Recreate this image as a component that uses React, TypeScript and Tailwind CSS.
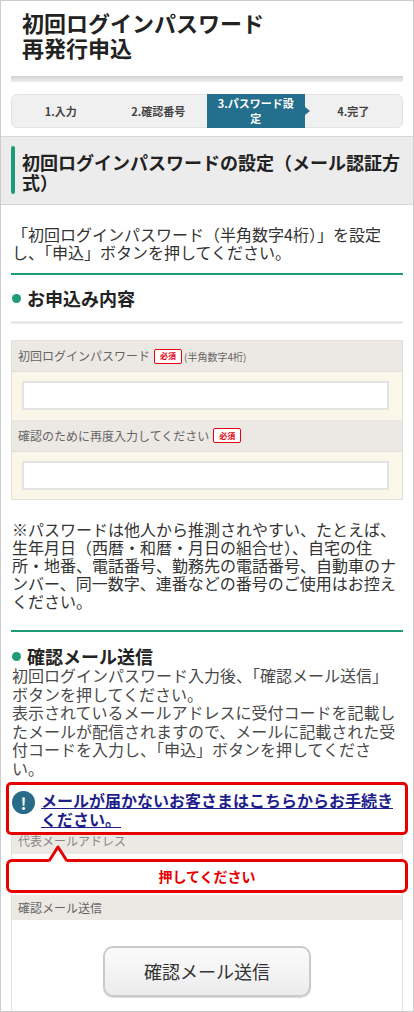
import React from "react";

function Badge() {
  return (
    <span className="ml-[4px] inline-flex h-[15px] w-[28px] items-center justify-center rounded-[2px] border-[1.5px] border-[#e60012] bg-white text-[8px] font-bold leading-none text-[#e60012]">
      必須
    </span>
  );
}

function SectionHead({ children }: { children: React.ReactNode }) {
  return (
    <div className="flex items-center pl-[11px] text-[18px] font-bold leading-[24px] text-[#222]">
      <span className="mr-[6px] h-[9px] w-[9px] rounded-full bg-[#1e9c77]" />
      {children}
    </div>
  );
}

export default function App() {
  const steps = ["1.入力", "2.確認番号", "3", "4.完了"];
  return (
    <div className="h-[1012px] w-[414px] overflow-hidden border border-[#cccccc] bg-white font-['Noto_Sans_CJK_JP','Noto_Sans',sans-serif] text-[#333]">
      {/* header */}
      <div className="pb-[8px] pt-[9px]">
        <h1 className="pl-[21px] text-[22px] font-bold leading-[25px] text-[#222]">
          初回ログインパスワード
          <br />
          再発行申込
        </h1>
        <div className="mx-[10px] mt-[16px] h-[6px] bg-gradient-to-b from-[#d2d2d2] to-[#efefef]" />
        <div className="relative mx-[10px] mt-[12px] flex h-[34px] rounded-[6px] border border-[#e3e3e3] bg-[#f0f0f0]">
          {steps.map((s, i) =>
            i === 2 ? (
              <div
                key={i}
                className="relative -my-px flex flex-1 items-center justify-center bg-[#256f8e] text-center text-[11px] font-bold leading-[15px] text-white"
              >
                <span>
                  3.パスワード設
                  <br />定
                </span>
                <span className="absolute right-[-5px] top-1/2 h-0 w-0 -translate-y-1/2 border-y-[4px] border-l-[5px] border-y-transparent border-l-[#256f8e]" />
              </div>
            ) : (
              <div
                key={i}
                className="flex flex-1 items-center justify-center text-[11px] font-bold leading-[15px] text-[#444]"
              >
                {s}
              </div>
            )
          )}
        </div>
      </div>

      {/* section heading box */}
      <div className="flex gap-[7px] border-y border-[#d7d7d7] bg-[#ececec] pb-[10px] pl-[10px] pt-[9px]">
        <span className="w-[4px] shrink-0 self-stretch rounded-[2px] bg-[#1e9c77]" />
        <div className="pb-[2px] pt-[6px] text-[18px] font-bold leading-[20px] text-[#222]">
          初回ログインパスワードの設定（メール認証方
          <br />
          式）
        </div>
      </div>

      <p className="mt-[20px] whitespace-nowrap px-[11px] text-[16px] leading-[18px] text-[#333]">
        「初回ログインパスワード（半角数字4桁）」を設定
        <br />
        し、「申込」ボタンを押してください。
      </p>

      <div className="mx-[10px] mt-[12px] h-[2px] bg-[#1e9c77]" />

      <div className="mt-[11px]">
        <SectionHead>お申込み内容</SectionHead>
      </div>

      <div className="mx-[10px] mt-[11px] h-[3px] bg-[#e9e9e9]" />

      {/* form table */}
      <div className="mx-[10px] mt-[16px] border border-[#e4e0da]">
        <div className="flex h-[31px] items-center border-b border-dotted border-[#dcd7d0] bg-[#ece8e3] pl-[6px] text-[12px] text-[#666]">
          初回ログインパスワード
          <Badge />
          <span className="ml-[2px] text-[10px]">(半角数字4桁)</span>
        </div>
        <div className="h-[48px] bg-[#faf6e8] pl-[10px] pt-[9px]">
          <div className="h-[29px] w-[367px] border-2 border-[#e3e3e3] bg-white" />
        </div>
        <div className="flex h-[32px] items-center border-b border-dotted border-[#dcd7d0] bg-[#ece8e3] pl-[6px] text-[12px] text-[#666]">
          確認のために再度入力してください
          <Badge />
        </div>
        <div className="h-[47px] bg-[#faf6e8] pl-[10px] pt-[9px]">
          <div className="h-[29px] w-[367px] border-2 border-[#e3e3e3] bg-white" />
        </div>
      </div>

      <p className="mt-[20px] whitespace-nowrap px-[11px] text-[16px] leading-[18px] text-[#333]">
        ※パスワードは他人から推測されやすい、たとえば、
        <br />
        生年月日（西暦・和暦・月日の組合せ）、自宅の住
        <br />
        所・地番、電話番号、勤務先の電話番号、自動車のナ
        <br />
        ンバー、同一数字、連番などの番号のご使用はお控え
        <br />
        ください。
      </p>

      <div className="mx-[10px] mt-[20px] h-[2px] bg-[#1e9c77]" />

      <div className="mt-[14px]">
        <div className="flex items-center pl-[11px] text-[18px] font-bold leading-[20px] text-[#222]">
          <span className="mr-[6px] h-[9px] w-[9px] rounded-full bg-[#1e9c77]" />
          確認メール送信
        </div>
      </div>

      <p className="whitespace-nowrap px-[11px] text-[16px] leading-[18.5px] text-[#4a4a4a]">
        初回ログインパスワード入力後、「確認メール送信」
        <br />
        ボタンを押してください。
        <br />
        表示されているメールアドレスに受付コードを記載し
        <br />
        たメールが配信されますので、メールに記載された受
        <br />
        付コードを入力し、「申込」ボタンを押してくださ
        <br />
        い。
      </p>

      {/* highlighted link box */}
      <div className="relative z-10 mx-[5px] mb-[-8px] mt-[5px] flex items-start gap-[6px] rounded-[5px] border-[3px] border-[#e60000] bg-white pb-[4px] pl-[3px] pt-[6px]">
        <span className="flex h-[23px] w-[23px] shrink-0 items-center justify-center rounded-full bg-[#276b88] text-[16px] font-bold leading-none text-white">
          !
        </span>
        <a
          href="#"
          className="whitespace-nowrap text-[16px] font-bold leading-[18.5px] text-[#1f1f8c] underline"
        >
          メールが届かないお客さまはこちらからお手続き
          <br />
          ください。
        </a>
      </div>

      {/* mail table */}
      <div className="relative mx-[10px] border border-[#e4e0da]">
        <div className="flex h-[26px] items-center bg-[#ece8e3] pl-[6px] text-[12px] text-[#888]">
          代表メールアドレス
        </div>
        <div className="h-[41px] bg-white" />
        <div className="flex h-[25px] items-center bg-[#ece8e3] pl-[6px] text-[12px] text-[#666]">
          確認メール送信
        </div>
        <div className="h-[120px] bg-white pt-[26px]">
          <button className="mx-auto flex h-[51px] w-[208px] items-center justify-center rounded-[10px] border-2 border-[#cacaca] bg-gradient-to-b from-[#fbfbfb] to-[#ececec] text-[18px] text-[#333] shadow-[0_1px_1px_rgba(0,0,0,0.15)]">
            確認メール送信
          </button>
        </div>

        {/* callout */}
        <div className="absolute left-[-6px] top-[31px] z-20 flex h-[34px] w-[402px] items-center justify-center rounded-[6px] border-[3px] border-[#e60000] bg-white text-[14px] font-bold text-[#e60000]">
          押してください
          <svg
            className="absolute left-[38px] top-[-17px]"
            width="22"
            height="17"
            viewBox="0 0 22 17"
          >
            <polygon points="2,17 11,2 20,17" fill="#ffffff" />
            <polyline
              points="2,16 11,2 20,16"
              fill="none"
              stroke="#e60000"
              strokeWidth="3"
              strokeLinejoin="round"
            />
          </svg>
        </div>
      </div>
    </div>
  );
}
